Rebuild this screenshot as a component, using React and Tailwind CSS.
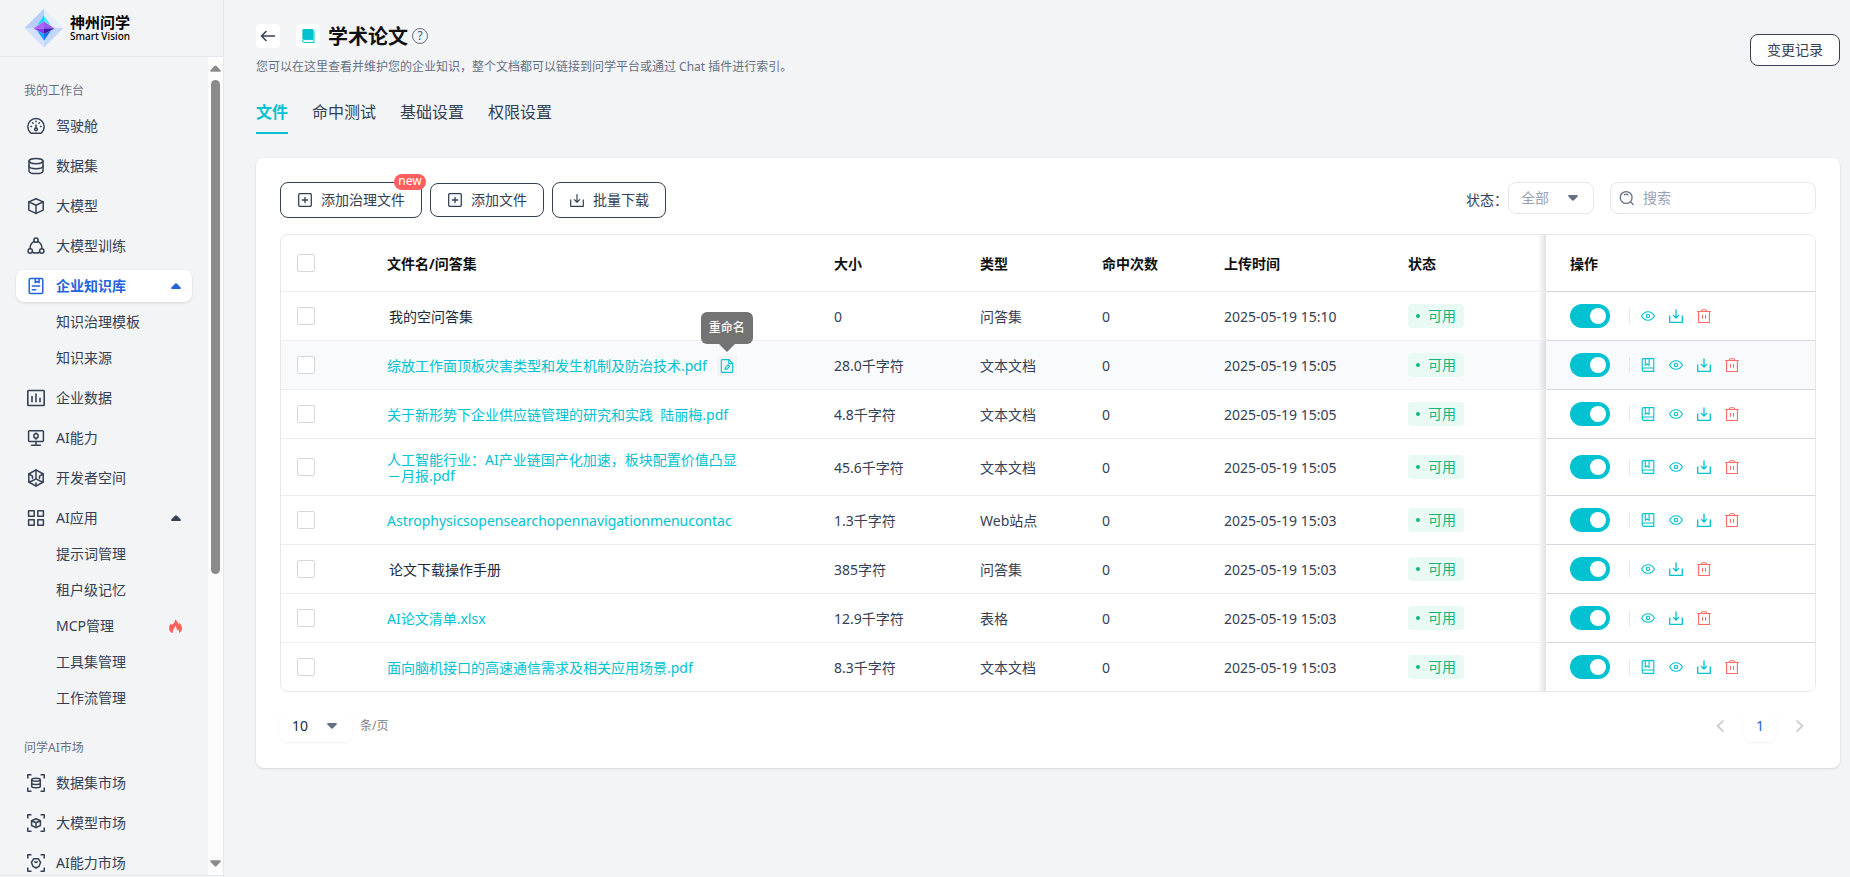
import React from 'react';

const TEAL = 'text-[#00c2d1]';

function Svg({ className = 'size-[18px]', box = '0 0 18 18', width = 1.4, children }) {
  return (
    <svg
      aria-hidden="true"
      className={className + ' shrink-0'}
      viewBox={box}
      fill="none"
      stroke="currentColor"
      strokeWidth={width}
      strokeLinecap="round"
      strokeLinejoin="round"
    >
      {children}
    </svg>
  );
}

const navIcons = {
  gauge: (
    <Svg width={1.5}>
      <path d="M4.6 16.3h8.8a1.6 1.6 0 0 0 1.3-.7A8.2 8.2 0 1 0 3.3 15.600a1.600 1.600 0 0 0 1.300.7z" />
      <path d="M9 8v3" />
      <circle cx="9" cy="12.3" r="1.400" />
      <path d="M9 4.200v.6M5.600 5.800l.4.4M12.400 5.800l-.4.4M3.900 9.600h.6M13.500 9.600h.6" />
    </Svg>
  ),
  database: (
    <Svg width={1.5}>
      <ellipse cx="9" cy="4.100" rx="7" ry="2.700" />
      <path d="M2 4.100v9.800c0 1.500 3.100 2.700 7 2.700s7-1.200 7-2.700V4.100" />
      <path d="M2 9c0 1.500 3.100 2.700 7 2.700s7-1.200 7-2.700" />
    </Svg>
  ),
  cube: (
    <Svg width={1.5}>
      <path d="M9 1.700l7.200 3.200v8.200L9 16.400l-7.200-3.300V4.900z" />
      <path d="M1.800 4.900L9 8.200l7.200-3.300M9 8.200v8.200" />
    </Svg>
  ),
  training: (
    <Svg width={1.5}>
      <circle cx="9" cy="3.200" r="2.100" />
      <circle cx="3.200" cy="14" r="2.200" />
      <circle cx="14.800" cy="14" r="2.200" />
      <path d="M7 4.400C4.400 5.800 3 8.500 3 11.800M11 4.400c2.600 1.400 4 4.100 4 7.400M5.300 15.300c2.300 1 5.100 1 7.400 0" />
    </Svg>
  ),
  knowledge: (
    <Svg width={1.5}>
      <rect x="2.200" y="1.500" width="13.600" height="15" rx="1.200" />
      <path d="M8.300 1.500v4.200l1.900-1.300 1.900 1.300V1.500M5.300 9h7.400M5.300 12.800h3.400" />
    </Svg>
  ),
  chart: (
    <Svg width={1.6}>
      <rect x=".8" y="1.500" width="16.400" height="15" rx=".8" />
      <path d="M5 7.500v5.300M9 5v7.800M13 9.300v3.500" />
    </Svg>
  ),
  ability: (
    <Svg width={1.5}>
      <rect x="1.600" y="1.800" width="14.800" height="10.600" rx=".8" />
      <circle cx="9" cy="7" r="2.200" />
      <path d="M9 12.600v3.500M4.600 16.300h8.800M9 3.900v.6M9 9.600v.6" />
    </Svg>
  ),
  developer: (
    <Svg width={1.5}>
      <path d="M9 .9l7.200 4.100v8L9 17.100 1.800 13V5z" />
      <path d="M9 1v6.200M9 9.800v-2.600M9 9.800l-3.300 1.900M9 9.800l3.300 1.900M1.900 5l3.600 2.200M16.100 5l-3.600 2.200M2 12.900l3.700-1.200M16 12.900l-3.700-1.200M5.500 7.200v2.400M12.500 7.200v2.400M9 17v-3" />
    </Svg>
  ),
  apps: (
    <Svg width={1.5}>
      <rect x="1.600" y="1.700" width="5.600" height="5.600" />
      <rect x="10.800" y="1.700" width="5.600" height="5.600" />
      <rect x="1.600" y="10.700" width="5.600" height="5.600" />
      <rect x="10.800" y="10.700" width="5.600" height="5.600" />
    </Svg>
  ),
  marketData: (
    <Svg width={1.5}>
      <path strokeLinecap="butt" d="M.8 4.500V.8h3.700M13.500.8h3.700v3.700M17.200 13.500v3.700h-3.700M4.500 17.200H.8v-3.700" />
      <ellipse cx="9" cy="5.800" rx="4.300" ry="1.500" />
      <path d="M4.700 5.800v6.500c0 .8 1.900 1.500 4.300 1.500s4.300-.7 4.300-1.500V5.800M4.700 9c0 .8 1.900 1.500 4.300 1.500s4.300-.7 4.300-1.500" />
    </Svg>
  ),
  marketModel: (
    <Svg width={1.5}>
      <path strokeLinecap="butt" d="M.8 4.500V.8h3.700M13.500.8h3.700v3.700M17.200 13.500v3.700h-3.700M4.500 17.200H.8v-3.700" />
      <path d="M9 4.700l4.400 2v4.800L9 13.600l-4.400-2.100V6.700z" />
      <path d="M4.600 6.700L9 8.700l4.400-2M9 8.700v4.900" />
    </Svg>
  ),
  marketAbility: (
    <Svg width={1.5}>
      <path strokeLinecap="butt" d="M.8 4.500V.8h3.700M13.500.8h3.700v3.700M17.200 13.500v3.700h-3.700M4.500 17.200H.8v-3.700" />
      <path d="M6.600 4.800h4.800l2.200 3.500-1.600 4.100L9 14l-3-1.600-1.600-4.100z" />
      <path d="M7.800 7.800l1.200.7 1.200-.7" />
    </Svg>
  ),
};

const groups = [
  {
    title: '我的工作台',
    items: [
      { icon: 'gauge', label: '驾驶舱' },
      { icon: 'database', label: '数据集' },
      { icon: 'cube', label: '大模型' },
      { icon: 'training', label: '大模型训练' },
      {
        icon: 'knowledge',
        label: '企业知识库',
        active: true,
        children: [{ label: '知识治理模板' }, { label: '知识来源' }],
      },
      { icon: 'chart', label: '企业数据' },
      { icon: 'ability', label: 'AI能力' },
      { icon: 'developer', label: '开发者空间' },
      {
        icon: 'apps',
        label: 'AI应用',
        children: [
          { label: '提示词管理' },
          { label: '租户级记忆' },
          { label: 'MCP管理', hot: true },
          { label: '工具集管理' },
          { label: '工作流管理' },
        ],
      },
    ],
  },
  {
    title: '问学AI市场',
    items: [
      { icon: 'marketData', label: '数据集市场' },
      { icon: 'marketModel', label: '大模型市场' },
      { icon: 'marketAbility', label: 'AI能力市场' },
    ],
  },
];

function Triangle({ className, up }) {
  return (
    <svg aria-hidden="true" className={className} viewBox="0 0 10 6">
      <path
        fill="currentColor"
        d={up ? 'M5 0.300c.4 0 .7.200 1 .5l3.600 3.700c.6.600.2 1.500-.6 1.500H1C.2 6-.2 5.100.4 4.500L4 .8c.3-.3.6-.5 1-.5z' : 'M5 5.700c-.4 0-.7-.2-1-.5L.4 1.500C-.2.9.2 0 1 0h8c.8 0 1.200.9.6 1.500L6 5.200c-.3.3-.6.5-1 .5z'}
      />
    </svg>
  );
}

function Logo() {
  return (
    <svg aria-hidden="true" className="size-10 shrink-0" viewBox="0 0 40 40">
      <path fill="#b9cffb" d="M20 .5L.5 20 20 20z" />
      <path fill="#e6eefd" d="M20 .5L39.500 20H20z" />
      <path fill="#d3e1fd" d="M.5 20L20 39.500V20z" />
      <path fill="#c3d6fb" d="M39.500 20L20 39.500V20z" />
      <path fill="#1fd0f8" d="M20 7.500l-7 10 7-4z" />
      <path fill="#4be6f9" d="M20 7.500l7 10-7-4z" />
      <path fill="#b061f6" d="M20 13.500L9.500 20.500H20z" />
      <path fill="#9858f2" d="M20 13.500l10.500 7H20z" />
      <path fill="#8a3cf0" d="M9.500 20.500H20V26z" />
      <path fill="#3f1fa8" d="M30.500 20.500H20V26z" />
      <path fill="#18a0fb" d="M13 22.400l7 10V26z" />
      <path fill="#1470f0" d="M27 22.400l-7 10V26z" />
    </svg>
  );
}

function Sidebar() {
  return (
    <aside className="flex h-full w-56 shrink-0 flex-col border-r border-[#e4e7ec]">
      <a href="#" className="flex h-[57px] shrink-0 items-center gap-1.5 border-b border-[#e4e7ec] pl-6 text-black">
        <Logo />
        <span className="flex flex-col">
          <span className="text-[15px] leading-4 font-bold">神州问学</span>
          <span className="text-[10px] leading-3 font-medium whitespace-nowrap">Smart Vision</span>
        </span>
      </a>
      <div className="mb-px flex min-h-0 flex-1 border-b border-[#e4e7ec]">
        <nav className="min-w-0 flex-1 overflow-hidden pr-4 pl-4">
          {groups.map((g) => (
            <section key={g.title} className="pt-[26px]">
              <h2 className="pl-2 text-xs leading-4 text-[#667085]">{g.title}</h2>
              <ul className="mt-[11px] flex flex-col gap-2">
                {g.items.map((it) => (
                  <li key={it.label}>
                    <a
                      href="#"
                      className={
                        'flex h-8 items-center gap-[11px] rounded-lg pr-[11px] pl-[11px] ' +
                        (it.active ? 'bg-white font-bold text-[#2463dc] shadow-sm' : 'text-[#344054]')
                      }
                    >
                      {navIcons[it.icon]}
                      <span className="flex-1">{it.label}</span>
                      {it.children && <Triangle up className="h-1.5 w-2.5" />}
                    </a>
                    {it.children && (
                      <ul className="mt-1.5 flex flex-col gap-2 pb-0.5">
                        {it.children.map((c) => (
                          <li key={c.label}>
                            <a href="#" className="flex h-7 items-center justify-between pr-2.5 pl-10 text-[#344054]">
                              {c.label}
                              {c.hot && (
                                <svg aria-hidden="true" className="h-3.5 w-[13px]" viewBox="0 0 13 14">
                                  <path
                                    fill="#ff5f5a"
                                    d="M6.300 0c.3 1.500 3 2.700 3.300 5.500.5-.3.700-.9.7-1.600C12 5.200 13 7.200 13 9.200c0 2.200-1.200 4-3.200 4.800.7-1.600.1-2.800-.9-3.800-.2.900-.6 1.200-1 1.400.1-2-.6-3.700-1.800-4.800-.1 2.400-2.800 3.600-2 7.200C1.600 13.400 0 11.700 0 9.200c0-2 1-3.100 1.500-4.800.6.5.9 1.100 1 1.800C4.800 4.500 6.200 2.600 6.300 0z"
                                  />
                                </svg>
                              )}
                            </a>
                          </li>
                        ))}
                      </ul>
                    )}
                  </li>
                ))}
              </ul>
            </section>
          ))}
        </nav>
        <div aria-hidden="true" className="flex w-[15px] shrink-0 flex-col items-center bg-[#fcfcfc] pt-2 pb-2 text-[#8b8b8b]">
          <Triangle up className="h-[7px] w-[11px]" />
          <div className="my-2 flex w-full flex-1 justify-center">
            <div className="h-[64%] w-[9px] rounded-full bg-[#8b8b8b]" />
          </div>
          <Triangle className="h-[7px] w-[11px]" />
        </div>
      </div>
    </aside>
  );
}

function PlusSquare() {
  return (
    <Svg className="size-4" box="0 0 16 16" width={1.3}>
      <rect x="1.700" y="1.700" width="12.600" height="12.600" rx="1" />
      <path d="M8 5.300v5.400M5.300 8h5.400" />
    </Svg>
  );
}

function Download() {
  return (
    <Svg className="size-3.5" box="0 0 14 14" width={1.3}>
      <path strokeLinecap="butt" d="M.7 6.500v6.800h12.600V6.500" />
      <path d="M7 .8v8M4.300 6.400L7 9l2.700-2.600" />
    </Svg>
  );
}

function IconButton({ label, className = TEAL, children }) {
  return (
    <button type="button" aria-label={label} className={'flex size-3.5 items-center justify-center ' + className}>
      {children}
    </button>
  );
}

const iconSegment = (
  <Svg className="size-3.5" box="0 0 14 14" width={1.1}>
    <path d="M1.200 11.500V1.800c0-.7.5-1.200 1.200-1.200h10.400v12.800H2.800c-.9 0-1.600-.8-1.600-1.900s.7-1.500 1.600-1.500h10" />
    <path d="M4.300.8v6.600l1.900-1.600 1.900 1.600V.8" />
  </Svg>
);
const iconEye = (
  <Svg className="size-3.5" box="0 0 14 14" width={1.1}>
    <path d="M.6 7C2 4.300 4.300 2.700 7 2.700S12 4.300 13.400 7C12 9.700 9.700 11.300 7 11.300S2 9.700.6 7z" />
    <circle cx="7" cy="7" r="1.700" />
  </Svg>
);
const iconTrash = (
  <Svg className="size-3.5" box="0 0 14 14" width={1.1}>
    <path d="M.6 2.500h12.800M4 2.300c.3-1.100 1-1.600 1.800-1.600h2.400c.8 0 1.500.5 1.800 1.600M1.600 2.700v10.800h10.800V2.700M5.500 6.200v3M8.500 6.200v3" />
  </Svg>
);

const rows = [
  { name: '我的空问答集', size: '0', type: '问答集', time: '2025-05-19 15:10', plain: true },
  { name: '综放工作面顶板灾害类型和发生机制及防治技术.pdf', size: '28.0千字符', type: '文本文档', time: '2025-05-19 15:05', hover: true, segment: true },
  { name: '关于新形势下企业供应链管理的研究和实践  陆丽梅.pdf', size: '4.8千字符', type: '文本文档', time: '2025-05-19 15:05', segment: true },
  { name: '人工智能行业：AI产业链国产化加速，板块配置价值凸显－月报.pdf', size: '45.6千字符', type: '文本文档', time: '2025-05-19 15:05', segment: true },
  { name: 'Astrophysicsopensearchopennavigationmenucontac', size: '1.3千字符', type: 'Web站点', time: '2025-05-19 15:03', segment: true },
  { name: '论文下载操作手册', size: '385字符', type: '问答集', time: '2025-05-19 15:03', plain: true },
  { name: 'AI论文清单.xlsx', size: '12.9千字符', type: '表格', time: '2025-05-19 15:03' },
  { name: '面向脑机接口的高速通信需求及相关应用场景.pdf', size: '8.3千字符', type: '文本文档', time: '2025-05-19 15:03', segment: true },
];

function Checkbox({ label }) {
  return (
    <input
      type="checkbox"
      aria-label={label}
      className="block size-[18px] appearance-none rounded-xs border border-[#d5d7db] bg-white checked:bg-[#00c2d1]"
    />
  );
}

function RenameButton() {
  return (
    <span className="relative ml-2.5 flex shrink-0">
      <button type="button" aria-label="重命名" className={'flex size-5 items-center justify-center rounded-xs bg-[#f2f4f7] ' + TEAL}>
        <Svg className="size-3.5" box="0 0 14 14" width={1.1}>
          <path d="M8.800.6H2.100c-.4 0-.8.4-.8.800v11.200c0 .4.4.8.800.8h9.800c.4 0 .8-.4.800-.8V4.500z" />
          <path d="M8.800.6v3.900h3.900M5 10.500l.4-1.900 2.700-2.700 1.500 1.500-2.700 2.700z" />
        </Svg>
      </button>
      <span
        role="tooltip"
        className="absolute bottom-full left-1/2 mb-3 flex h-8 w-[52px] -translate-x-1/2 items-center justify-center rounded-md bg-[#737373] text-xs font-medium whitespace-nowrap text-white"
      >
        重命名
        <svg aria-hidden="true" className="absolute top-full left-1/2 h-2 w-4 -translate-x-1/2" viewBox="0 0 16 8">
          <path fill="#737373" d="M0 0h16L8 8z" />
        </svg>
      </span>
    </span>
  );
}

function FileTable() {
  const head = 'pt-0.5 pl-6 text-left font-bold text-[#101010]';
  const cell = 'pt-0.5 pl-6 whitespace-nowrap';
  const pinned =
    'relative border-b border-[#d5d9df] pl-6 before:absolute before:inset-y-0 before:-left-2 before:w-2 before:bg-linear-to-l before:from-black/12 before:to-transparent ';
  return (
    <div className="mt-4 overflow-hidden rounded-lg border border-[#e4e7ec]">
      <table className="w-full table-fixed border-separate border-spacing-0">
        <colgroup>
          <col className="w-[82px]" />
          <col />
          <col className="w-[146px]" />
          <col className="w-[122px]" />
          <col className="w-[122px]" />
          <col className="w-[184px]" />
          <col className="w-[162px]" />
          <col className="w-[269px]" />
        </colgroup>
        <thead>
          <tr className="h-[57px] [&>th:not(:last-child)]:border-b [&>th:not(:last-child)]:border-[#eceef1]">
            <th className="pl-4"><Checkbox label="全选" /></th>
            <th className={head}>文件名/问答集</th>
            <th className={head}>大小</th>
            <th className={head}>类型</th>
            <th className={head}>命中次数</th>
            <th className={head}>上传时间</th>
            <th className={head}>状态</th>
            <th className={pinned + 'bg-white pt-0.5 text-left font-bold text-[#101010]'}>操作</th>
          </tr>
        </thead>
        <tbody className="text-[#344054]">
          {rows.map((r) => (
            <tr
              key={r.name}
              className={'h-[49px] [&>td:not(:last-child)]:border-b [&>td:not(:last-child)]:border-[#eceef1] last:h-12 last:[&>td]:border-b-0! ' + (r.hover ? 'bg-[#f9fafb]' : 'bg-white')}
            >
              <td className="pl-4"><Checkbox label={'选择 ' + r.name} /></td>
              <td className="pt-[13px] pb-[11px] pl-6 leading-4">
                <div className="flex items-center">
                  {r.plain ? (
                    <span className="pl-0.5 text-[#1d2939]">{r.name}</span>
                  ) : (
                    <a href="#" className={'max-w-[352px] whitespace-pre-wrap ' + TEAL}>{r.name}</a>
                  )}
                  {r.hover && <RenameButton />}
                </div>
              </td>
              <td className={cell}>{r.size}</td>
              <td className={cell}>{r.type}</td>
              <td className={cell}>0</td>
              <td className={cell}>{r.time}</td>
              <td className="pl-6">
                <span className="flex h-6 w-14 items-center gap-2 rounded bg-[#e9faf4] pl-2 text-[#12b57e]">
                  <span className="size-1 rounded-full bg-current" />
                  可用
                </span>
              </td>
              <td className={pinned + (r.hover ? 'bg-[#f9fafb]' : 'bg-white')}>
                <div className="flex items-center">
                  <input
                    type="checkbox"
                    role="switch"
                    defaultChecked
                    aria-label={'启用 ' + r.name}
                    className="flex h-6 w-10 appearance-none items-center rounded-full bg-[#d0d5dd] px-1 before:size-4 before:rounded-full before:bg-white checked:justify-end checked:bg-[#00c2d1]"
                  />
                  <span className="mr-[11px] ml-[19px] h-4 w-px bg-[#e4e7ec]" />
                  <div className="flex gap-3.5">
                    {r.segment && <IconButton label="查看分段">{iconSegment}</IconButton>}
                    <IconButton label="预览">{iconEye}</IconButton>
                    <IconButton label="下载"><Download /></IconButton>
                    <IconButton label="删除" className="text-[#ff6b67]">{iconTrash}</IconButton>
                  </div>
                </div>
              </td>
            </tr>
          ))}
        </tbody>
      </table>
    </div>
  );
}

export default function App() {
  const outline = 'relative flex items-center gap-2 rounded-lg border border-[#344054] bg-white px-4 text-[#344054]';
  return (
    <div className="flex h-screen overflow-hidden bg-[#f2f4f6] font-['Noto_Sans','Noto_Sans_CJK_SC',sans-serif] text-sm text-[#344054]">
      <Sidebar />
      <main className="min-w-0 flex-1 overflow-hidden pt-6 pr-2.5 pl-8">
        <header className="flex items-center justify-between">
          <div>
            <div className="flex h-6 items-center">
              <button type="button" aria-label="返回" className="flex size-6 items-center justify-center rounded bg-white">
                <Svg className="size-4" box="0 0 16 16" width={1.6}>
                  <path d="M1.500 8h13M6 3.500L1.500 8 6 12.500" />
                </Svg>
              </button>
              <span className="ml-4 flex size-6 items-center justify-center rounded bg-white">
                <svg aria-hidden="true" className="size-3.5" viewBox="0 0 14 14">
                  <path fill="#00c2d1" d="M2.700 0H11.500c.5 0 .9.400.9.900V10H2.800c-.6 0-1.100.2-1.500.5V1.500C1.300.6 1.800 0 2.700 0z" />
                  <path fill="none" stroke="#00c2d1" strokeWidth="1" d="M13 1.500v11.900H2.900c-.8 0-1.400-.6-1.400-1.400s.6-1.400 1.400-1.400h9.500" />
                </svg>
              </span>
              <h1 className="ml-2 pt-0.5 text-xl leading-6 font-bold text-[#101010]">学术论文</h1>
              <button type="button" aria-label="帮助" className="ml-1 flex size-4 items-center justify-center rounded-full border border-[#667085] text-xs leading-4 text-[#475467]">
                ?
              </button>
            </div>
            <p className="mt-2.5 text-xs leading-[18px] text-[#667085]">
              您可以在这里查看并维护您的企业知识，整个文档都可以链接到问学平台或通过 Chat 插件进行索引。
            </p>
          </div>
          <button type="button" className={outline + ' h-8'}>变更记录</button>
        </header>

        <nav className="mt-6 flex gap-6 text-base leading-6">
          <a href="#" className="border-b-2 border-[#00c2d1] pb-2 font-bold text-[#00c2d1]">文件</a>
          <a href="#" className="pb-2">命中测试</a>
          <a href="#" className="pb-2">基础设置</a>
          <a href="#" className="pb-2">权限设置</a>
        </nav>

        <section className="mt-6 rounded-lg bg-white p-6 shadow-sm">
          <div className="flex items-start justify-between">
            <div className="flex items-center gap-2">
              <button type="button" className={outline + ' h-9'}>
                <PlusSquare />
                添加治理文件
                <span className="absolute -top-[9px] -right-[5px] flex h-4 w-8 items-center justify-center rounded-full bg-[#ff5f5f] pb-0.5 text-xs text-white">new</span>
              </button>
              <button type="button" className={outline + ' h-[34px]'}>
                <PlusSquare />
                添加文件
              </button>
              <button type="button" className={outline + ' h-9'}>
                <Svg className="size-4" box="-1 -1 16 16" width={1.2}>
                  <path strokeLinecap="butt" d="M.7 6.500v6.800h12.600V6.500" />
                  <path d="M7 1.500v7.500M4.300 6.600L7 9.200l2.700-2.600" />
                </Svg>
                批量下载
              </button>
            </div>
            <div className="flex items-start">
              <label htmlFor="status" className="leading-9">状态：</label>
              <div className="relative flex items-center">
                <select id="status" className="h-8 w-[86px] appearance-none rounded-lg border border-[#e4e7ec] bg-white pl-3 text-[#98a2b3]">
                  <option>全部</option>
                </select>
                <Triangle className="pointer-events-none absolute right-4 h-1.5 w-2.5 text-[#667085]" />
              </div>
              <label className="ml-4 flex h-8 w-[206px] items-center gap-2 rounded-lg border border-[#e4e7ec] bg-white px-2">
                <Svg className="size-4 text-[#667085]" box="0 0 16 16" width={1.3}>
                  <circle cx="7.200" cy="7.500" r="5.900" />
                  <path d="M11.500 11.800l2.700 2.700M5.400 4.800c1.100-.8 2.500-.8 3.600 0" />
                </Svg>
                <input type="search" aria-label="搜索" placeholder="搜索" className="w-full min-w-0 bg-transparent outline-none placeholder:text-[#98a2b3]" />
              </label>
            </div>
          </div>

          <FileTable />

          <div className="mt-4 flex h-9 items-center justify-between">
            <div className="flex items-center gap-2">
              <div className="relative flex items-center">
                <select aria-label="每页条数" className="h-8 w-[72px] appearance-none rounded-lg bg-white pl-3 text-[#1d2939] shadow-[0_1px_2px_rgba(16,24,40,0.07)]">
                  <option>10</option>
                </select>
                <Triangle className="pointer-events-none absolute right-[15px] h-1.5 w-2.5 text-[#667085]" />
              </div>
              <span className="text-xs text-[#808080]">条/页</span>
            </div>
            <div className="flex items-center gap-2 text-[#cfcfcf]">
              <button type="button" aria-label="上一页" className="flex size-8 items-center justify-center">
                <Svg className="size-3.5" box="0 0 14 14" width={1.7}><path d="M10 2L4.500 7l5.500 5" /></Svg>
              </button>
              <button type="button" aria-current="page" className="flex size-8 items-center justify-center rounded-lg bg-white text-[#2463dc] shadow-[0_1px_2px_rgba(16,24,40,0.07)]">1</button>
              <button type="button" aria-label="下一页" className="flex size-8 items-center justify-center">
                <Svg className="size-3.5" box="0 0 14 14" width={1.7}><path d="M4 2l5.500 5L4 12" /></Svg>
              </button>
            </div>
          </div>
        </section>
      </main>
    </div>
  );
}
